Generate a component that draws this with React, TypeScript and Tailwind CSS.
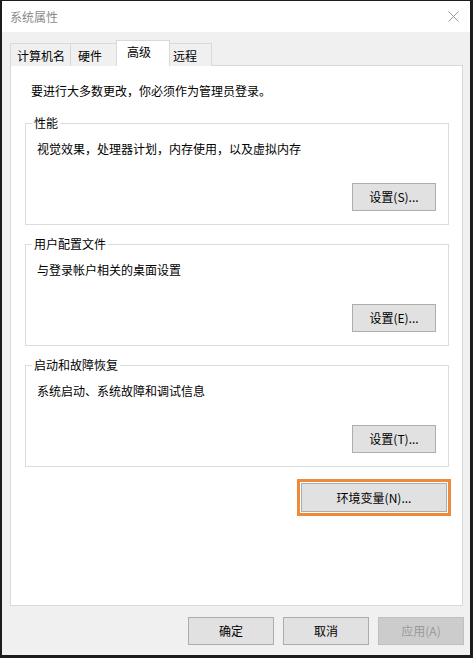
import React from "react";

const font = { fontFamily: '"Microsoft YaHei", "Noto Sans CJK SC", sans-serif' };

function Button({
  label,
  className = "",
  disabled = false,
}: {
  label: string;
  className?: string;
  disabled?: boolean;
}) {
  return (
    <button
      className={
        "h-[28px] text-[12px] leading-none border " +
        (disabled
          ? "bg-[#cccccc] border-[#bfbfbf] text-[#9a9a9a] "
          : "bg-[#e1e1e1] border-[#adadad] text-black ") +
        className
      }
    >
      {label}
    </button>
  );
}

function Group({
  title,
  text,
  button,
}: {
  title: string;
  text: string;
  button: string;
}) {
  return (
    <div className="relative h-[102px] border border-[#dcdcdc] px-[11px] pt-[17px]">
      {/* legend sits on the top border */}
      <span className="absolute left-[6px] top-[-9px] bg-white px-[2px] text-[12px] leading-[16px] text-black">
        {title}
      </span>
      <div className="text-[12px] leading-[16px] text-black">{text}</div>
      <div className="flex justify-end mt-[26px] pr-px">
        <Button label={button} className="w-[84px]" />
      </div>
    </div>
  );
}

const tabs = [
  { label: "计算机名", w: "w-[61px] pl-[6px]" },
  { label: "硬件", w: "w-[47px] pl-[7px]" },
  { label: "高级", w: "w-[54px] pl-[10px]" },
  { label: "远程", w: "w-[44px] pl-[4px]" },
];

export default function App() {
  return (
    <div
      className="w-[473px] h-[658px] flex flex-col border-l-2 border-r-[3px] border-b-[3px] border-t border-[#1c1c1c] bg-white"
      style={font}
    >
      {/* Title bar */}
      <div className="h-[31px] flex items-center justify-between pl-[8px] pr-[10px] bg-white">
        <span className="text-[12px] text-[#8a8a8a]">系统属性</span>
        <svg width="11" height="11" viewBox="0 0 11 11" className="mr-[1px]">
          <path d="M0.5 0.5 L10.5 10.5 M10.5 0.5 L0.5 10.5" stroke="#9a9a9a" strokeWidth="1" />
        </svg>
      </div>

      {/* Body */}
      <div className="flex-1 bg-[#f0f0f0] pl-[8px] pr-[7px] pt-[8px] flex flex-col">
        {/* Tabs */}
        <div className="relative z-10 flex items-end h-[26px] -mb-px">
          {tabs.map((t) => {
            const active = t.label === "高级";
            return (
              <div
                key={t.label}
                className={
                  (active
                    ? "h-[26px] bg-white pt-[3px] -mx-[1px] relative z-10 "
                    : "h-[23px] bg-[#f0f0f0] pt-[4px] -ml-px first:ml-0 ") +
                  "border border-b-0 border-[#d9d9d9] text-[12px] leading-[16px] text-black " +
                  t.w
                }
              >
                {t.label}
              </div>
            );
          })}
        </div>

        {/* Panel */}
        <div className="h-[541px] bg-white border border-[#d9d9d9] flex flex-col">
          <div className="pl-[20px] pt-[17px] text-[12px] leading-[16px] text-black">
            要进行大多数更改，你必须作为管理员登录。
          </div>
          <div className="mt-[24px] ml-[14px] mr-[13px] flex flex-col gap-[19px]">
            <Group title="性能" text="视觉效果，处理器计划，内存使用，以及虚拟内存" button="设置(S)..." />
            <Group title="用户配置文件" text="与登录帐户相关的桌面设置" button="设置(E)..." />
            <Group title="启动和故障恢复" text="系统启动、系统故障和调试信息" button="设置(T)..." />
          </div>
          <div className="flex justify-end mt-[12px] mr-[11px]">
            <div className="border-[3px] border-[#ee8b3a] p-px">
              <Button label="环境变量(N)..." className="w-[146px] h-[29px]" />
            </div>
          </div>
        </div>

        {/* Footer buttons */}
        <div className="flex justify-end gap-[9px] mt-[11px] -mr-[1px]">
          <Button label="确定" className="w-[86px]" />
          <Button label="取消" className="w-[86px]" />
          <Button label="应用(A)" className="w-[86px]" disabled />
        </div>
      </div>
    </div>
  );
}
